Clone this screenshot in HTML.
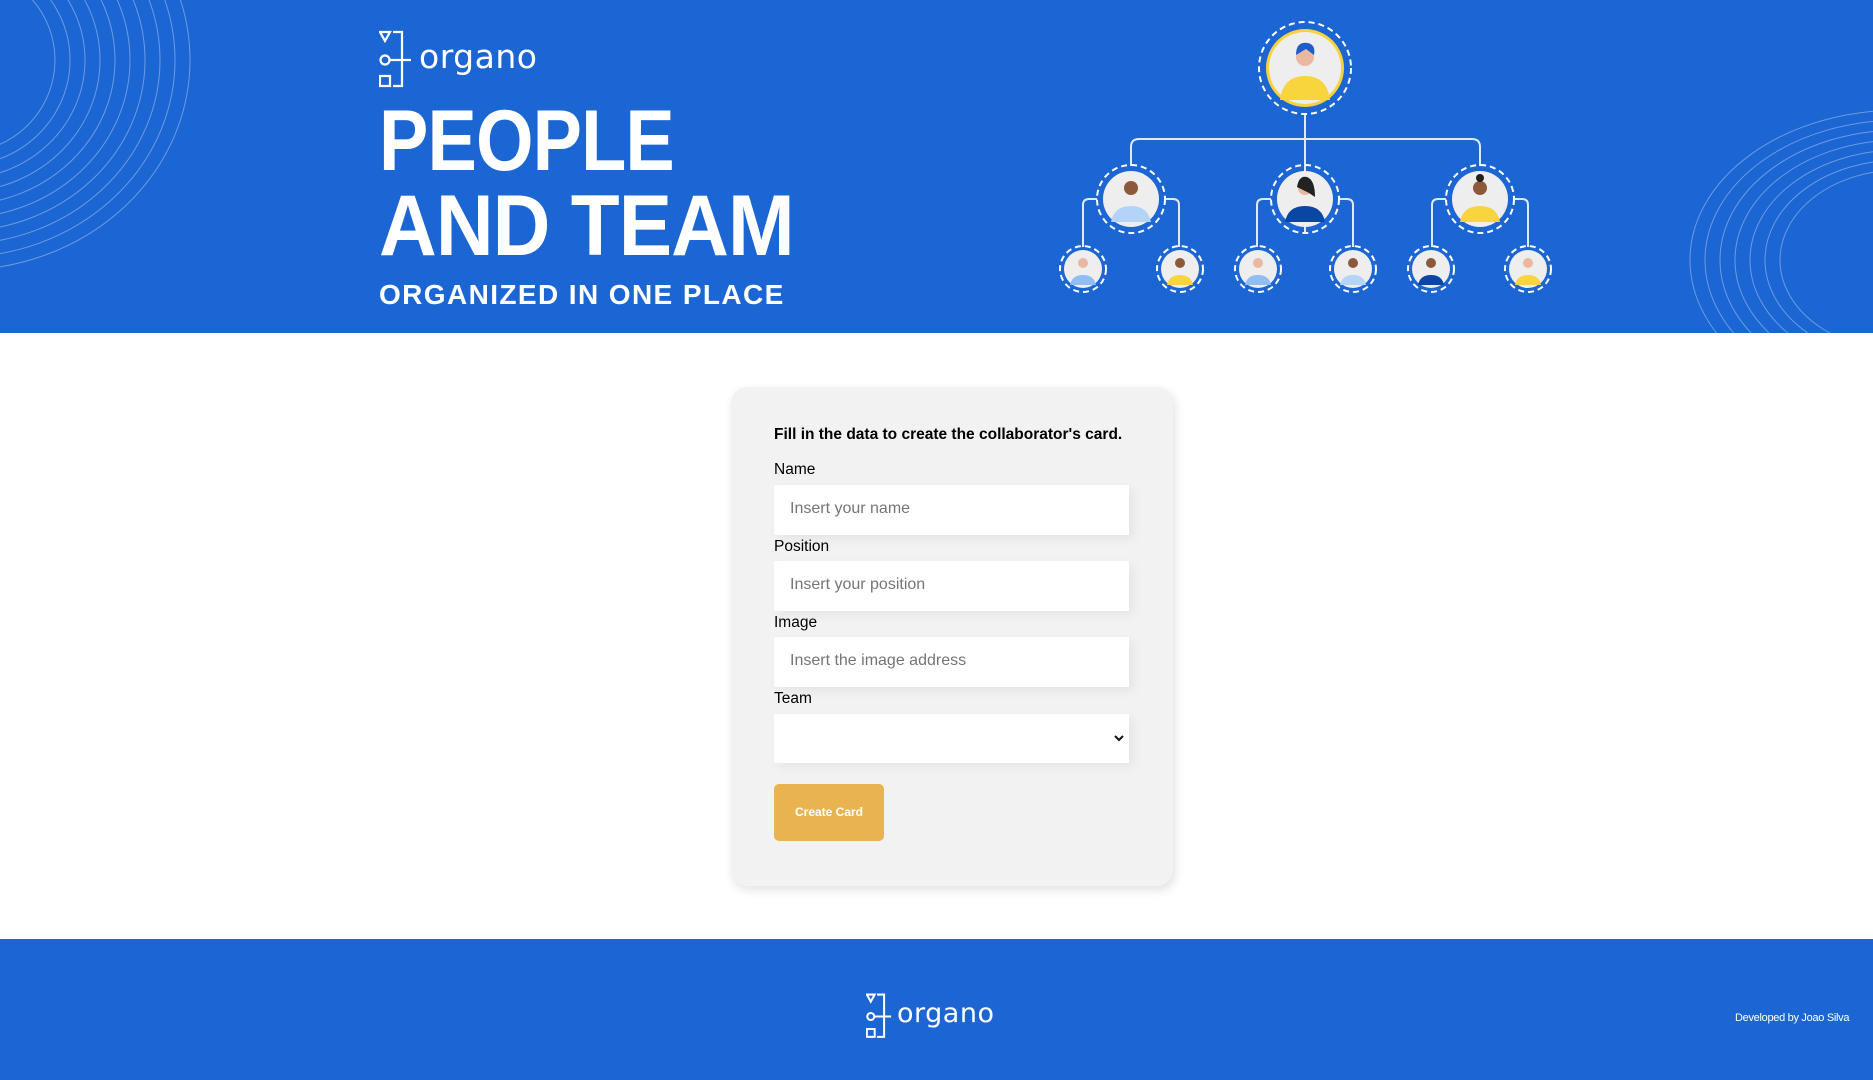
<!DOCTYPE html>
<html><head><meta charset="utf-8"><style>
*{margin:0;padding:0;box-sizing:border-box}
body{width:1873px;height:1080px;overflow:hidden;background:#fff;font-family:"Liberation Sans",sans-serif;position:relative}
.hdr{position:absolute;left:0;top:0;width:1873px;height:333px;background:#1c66d3;overflow:hidden}
.ftr{position:absolute;left:0;top:939px;width:1873px;height:141px;background:#1c66d3}
.logo{position:absolute;color:#fff;font-family:"DejaVu Sans","Liberation Sans",sans-serif}
.h1{position:absolute;left:379px;color:#fff;font-weight:bold;font-size:86px;letter-spacing:-1px;line-height:1;transform-origin:0 0;white-space:nowrap}
.sub{position:absolute;left:379px;top:279px;color:#fff;font-weight:bold;font-size:28px;letter-spacing:1.4px;white-space:nowrap}
.card{position:absolute;left:731px;top:387px;width:442px;height:499px;background:#f2f2f2;border-radius:16px;box-shadow:2px 4px 10px rgba(0,0,0,.12)}
.t{position:absolute;left:43px;font-size:15.5px;color:#000}
.in{position:absolute;left:43px;width:355px;height:50px;background:#fff;box-shadow:4px 4px 10px rgba(0,0,0,.06);font-size:16px;color:#757575;padding:15px 0 0 16px}
.btn{position:absolute;left:43px;top:397px;width:110px;height:57px;background:#e9b44f;border-radius:5px;color:#fff;font-weight:bold;font-size:12px;text-align:center;line-height:57px}
</style></head><body>
<div class="hdr">
<svg width="1873" height="333" style="position:absolute;left:0;top:0">
<g fill="none" stroke="#fff" stroke-opacity=".35" stroke-width="1">
<ellipse cx="-40" cy="60" rx="230" ry="210"/><ellipse cx="-40" cy="60" rx="215" ry="197"/><ellipse cx="-40" cy="60" rx="200" ry="184"/><ellipse cx="-40" cy="60" rx="185" ry="171"/><ellipse cx="-40" cy="60" rx="170" ry="158"/><ellipse cx="-40" cy="60" rx="155" ry="145"/><ellipse cx="-40" cy="60" rx="140" ry="132"/><ellipse cx="-40" cy="60" rx="125" ry="119"/><ellipse cx="-40" cy="60" rx="110" ry="106"/><ellipse cx="-40" cy="60" rx="95" ry="93"/>
<ellipse cx="1900" cy="260" rx="210" ry="150"/><ellipse cx="1900" cy="260" rx="195" ry="140"/><ellipse cx="1900" cy="260" rx="180" ry="130"/><ellipse cx="1900" cy="260" rx="165" ry="120"/><ellipse cx="1900" cy="260" rx="150" ry="110"/><ellipse cx="1900" cy="260" rx="135" ry="100"/><ellipse cx="1900" cy="260" rx="120" ry="90"/>
</g>
<g fill="none" stroke="#dfe9fb" stroke-width="2">
<path d="M1305 114V232M1131 166V147q0-8 8-8H1472q8 0 8 8v19"/>
<path d="M1097 199h-8q-6 0-6 6v42M1165 199h8q6 0 6 6v42M1271 199h-8q-6 0-6 6v42M1339 199h8q6 0 6 6v42M1446 199h-8q-6 0-6 6v42M1514 199h8q6 0 6 6v42"/>
</g>
<g fill="none" stroke="#fff" stroke-width="2" stroke-dasharray="6 4">
<circle cx="1305" cy="68" r="46"/>
<circle cx="1131" cy="199" r="34"/><circle cx="1305" cy="199" r="34"/><circle cx="1480" cy="199" r="34"/>
<circle cx="1083" cy="269" r="23"/><circle cx="1180" cy="269" r="23"/><circle cx="1258" cy="269" r="23"/><circle cx="1353" cy="269" r="23"/><circle cx="1431" cy="269" r="23"/><circle cx="1528" cy="269" r="23"/>
</g>
<circle cx="1305" cy="68" r="39" fill="#f7d23a"/><circle cx="1305" cy="68" r="36" fill="#eeeeee"/>
<path d="M1280 100q3-24 25-24t25 24z" fill="#f8d43d"/><circle cx="1305" cy="57" r="9" fill="#eab8a0"/><path d="M1296 55q0-14 12-12q8 2 6 12l-8-6z" fill="#1d5ec9"/>
<g fill="#eeeeee"><circle cx="1131" cy="199" r="28"/><circle cx="1305" cy="199" r="28"/><circle cx="1480" cy="199" r="28"/>
<circle cx="1083" cy="269" r="19"/><circle cx="1180" cy="269" r="19"/><circle cx="1258" cy="269" r="19"/><circle cx="1353" cy="269" r="19"/><circle cx="1431" cy="269" r="19"/><circle cx="1528" cy="269" r="19"/></g>
<g><path d="M1111 222q3-16 20-16t20 16z" fill="#b3d4f7"/><circle cx="1131" cy="188" r="7" fill="#8c5a3a"/>
<path d="M1285 222q3-16 20-16t20 16z" fill="#0a47a5"/><circle cx="1305" cy="188" r="7" fill="#eab8a0"/><path d="M1297 187q2-12 10-10q8 3 8 20l-6-4z" fill="#222"/>
<path d="M1460 222q3-16 20-16t20 16z" fill="#f8d43d"/><circle cx="1480" cy="188" r="7" fill="#8c5a3a"/><circle cx="1480" cy="178" r="4" fill="#222"/>
<path d="M1070 285q2-10 13-10t13 10z" fill="#8fbdf4"/><circle cx="1083" cy="263" r="5" fill="#eab8a0"/>
<path d="M1167 285q2-10 13-10t13 10z" fill="#f8d43d"/><circle cx="1180" cy="263" r="5" fill="#8c5a3a"/>
<path d="M1245 285q2-10 13-10t13 10z" fill="#8fbdf4"/><circle cx="1258" cy="263" r="5" fill="#eab8a0"/>
<path d="M1340 285q2-10 13-10t13 10z" fill="#b3d4f7"/><circle cx="1353" cy="263" r="5" fill="#8c5a3a"/>
<path d="M1418 285q2-10 13-10t13 10z" fill="#0a47a5"/><circle cx="1431" cy="263" r="5" fill="#8c5a3a"/>
<path d="M1515 285q2-10 13-10t13 10z" fill="#f8d43d"/><circle cx="1528" cy="263" r="5" fill="#eab8a0"/></g>
</svg>
<svg class="logo" style="left:379px;top:30px" width="33" height="60" viewBox="0 0 33 60" fill="none" stroke="#fff" stroke-width="2.2">
<path d="M1 2h10L6 11z"/><path d="M14 2h9v54h-9"/><circle cx="6" cy="30" r="4.5"/><path d="M11 30h21"/><rect x="1" y="46" width="10" height="10"/>
</svg>
<div class="logo" style="left:419px;top:37px;font-size:33px;letter-spacing:0.5px">organo</div>
<div class="h1" style="top:98px;transform:scaleX(0.86)">PEOPLE</div>
<div class="h1" style="top:183px;transform:scaleX(0.93)">AND TEAM</div>
<div class="sub">ORGANIZED IN ONE PLACE</div>
</div>
<div class="card">
<div class="t" style="top:39px;font-weight:bold">Fill in the data to create the collaborator's card.</div>
<div class="t" style="top:74px">Name</div>
<div class="in" style="top:98px">Insert your name</div>
<div class="t" style="top:151px">Position</div>
<div class="in" style="top:174px">Insert your position</div>
<div class="t" style="top:227px">Image</div>
<div class="in" style="top:250px">Insert the image address</div>
<div class="t" style="top:303px">Team</div>
<div class="in" style="top:327px;height:49px"><svg style="position:absolute;right:5px;top:20px" width="10" height="8" viewBox="0 0 10 8"><path d="M1 2l4 4 4-4" fill="none" stroke="#111" stroke-width="2"/></svg></div>
<div class="btn">Create Card</div>
</div>
<div class="ftr">
<svg class="logo" style="left:866px;top:54px" width="26" height="47" viewBox="0 0 33 60" fill="none" stroke="#fff" stroke-width="2.6">
<path d="M1 2h10L6 11z"/><path d="M14 2h9v54h-9"/><circle cx="6" cy="30" r="4.5"/><path d="M11 30h21"/><rect x="1" y="46" width="10" height="10"/>
</svg>
<div class="logo" style="left:897px;top:59px;font-size:27px;letter-spacing:0.5px">organo</div>
<div style="position:absolute;left:1735px;top:73px;color:#fff;font-size:11px;letter-spacing:-0.3px">Developed by Joao Silva</div>
</div>
</body></html>
